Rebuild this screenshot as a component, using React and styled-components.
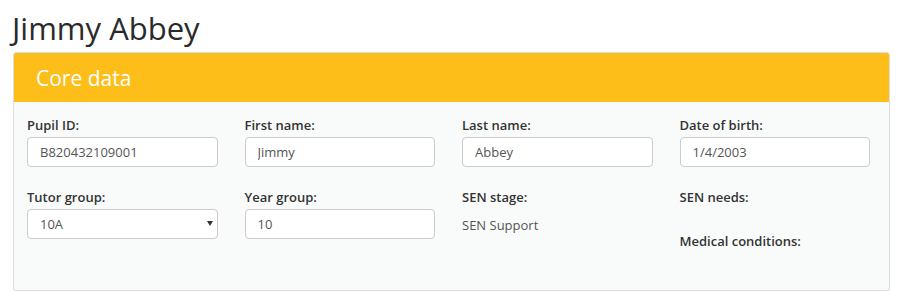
import React from "react";
import styled, { createGlobalStyle } from "styled-components";

const GlobalStyle = createGlobalStyle`
  body {
    margin: 0;
    background: #fff;
    font-family: "Open Sans", "Liberation Sans", sans-serif;
    color: #333;
  }
`;

const Page = styled.div`
  padding: 0 13px;
  width: 903px;
  box-sizing: border-box;
`;

const Title = styled.h1`
  margin: 0 0 0 -1px;
  padding: 8px 0 0 0;
  height: 52px;
  box-sizing: border-box;
  font-size: 31px;
  font-weight: 400;
  line-height: 40px;
  color: #2a2a2a;
`;

const Panel = styled.div`
  width: 877px;
  border: 1px solid #dddddd;
  border-radius: 3px;
  background: #f9fbfb;
  box-shadow: 0 1px 1px rgba(0, 0, 0, 0.06);
  box-sizing: border-box;
`;

const PanelHeader = styled.div`
  background: #fdbe19;
  height: 49px;
  display: flex;
  align-items: center;
  padding-left: 22px;
  color: #fff;
  font-size: 21px;
  border-radius: 2px 2px 0 0;
`;

const PanelBody = styled.div`
  padding: 14px 19px 37px 13px;
`;

const Grid = styled.div`
  display: grid;
  grid-template-columns: repeat(4, 1fr);
  column-gap: 27px;
  row-gap: 21px;
`;

const Field = styled.div`
  display: flex;
  flex-direction: column;
`;

const Label = styled.label`
  font-size: 13px;
  font-weight: 600;
  line-height: 18px;
  color: #333;
  margin-bottom: 3px;
`;

const Input = styled.input`
  height: 30px;
  box-sizing: border-box;
  border: 1px solid #cccccc;
  border-radius: 4px;
  background: #fff;
  padding: 0 12px;
  font-family: inherit;
  font-size: 13px;
  color: #555;
  outline: none;
`;

const SelectWrap = styled.div`
  position: relative;
`;

const Select = styled.select`
  width: 100%;
  height: 30px;
  box-sizing: border-box;
  border: 1px solid #cccccc;
  border-radius: 4px;
  background: #fff;
  padding: 0 12px;
  font-family: inherit;
  font-size: 13px;
  color: #555;
  appearance: none;
  outline: none;
`;

const Caret = styled.span`
  position: absolute;
  right: 5px;
  top: 12px;
  width: 0;
  height: 0;
  border-left: 3px solid transparent;
  border-right: 3px solid transparent;
  border-top: 5px solid #333;
  pointer-events: none;
`;

const Value = styled.div`
  font-size: 13px;
  line-height: 18px;
  color: #555;
  padding-top: 7px;
  min-height: ${(p) => (p.empty ? "16px" : "18px")};
`;

const fields = [
  { label: "Pupil ID:", value: "B820432109001" },
  { label: "First name:", value: "Jimmy" },
  { label: "Last name:", value: "Abbey" },
  { label: "Date of birth:", value: "1/4/2003" },
];

export default function App() {
  return (
    <>
      <GlobalStyle />
      <Page>
        <Title>Jimmy Abbey</Title>
        <Panel>
          <PanelHeader>Core data</PanelHeader>
          <PanelBody>
            <Grid>
              {fields.map((f) => (
                <Field key={f.label}>
                  <Label>{f.label}</Label>
                  <Input defaultValue={f.value} />
                </Field>
              ))}
              <Field>
                <Label>Tutor group:</Label>
                <SelectWrap>
                  <Select defaultValue="10A">
                    <option>10A</option>
                    <option>10B</option>
                  </Select>
                  <Caret />
                </SelectWrap>
              </Field>
              <Field>
                <Label>Year group:</Label>
                <Input defaultValue="10" />
              </Field>
              <Field>
                <Label>SEN stage:</Label>
                <Value>SEN Support</Value>
              </Field>
              <Field>
                <Label>SEN needs:</Label>
                <Value empty />
                <Label>Medical conditions:</Label>
              </Field>
            </Grid>
          </PanelBody>
        </Panel>
      </Page>
    </>
  );
}
